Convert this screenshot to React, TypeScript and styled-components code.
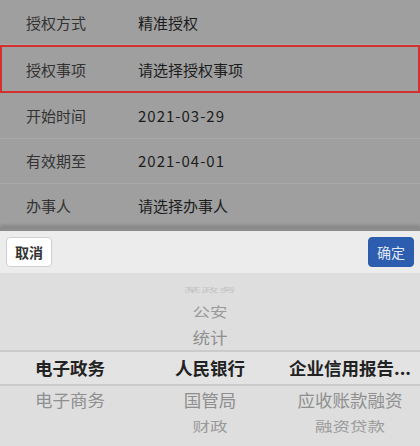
import React from 'react';
import styled, { createGlobalStyle } from 'styled-components';

const GlobalStyle = createGlobalStyle`
  html, body {
    margin: 0;
    padding: 0;
    background: #9f9f9f;
  }
  body {
    font-family: "Noto Sans CJK SC", "Noto Sans", sans-serif;
  }
`;

const Page = styled.div`
  width: 420px;
  height: 446px;
  display: flex;
  flex-direction: column;
  overflow: hidden;
`;

const Form = styled.div`
  height: 228px;
  background: #9f9f9f;
  display: flex;
  flex-direction: column;
`;

const Row = styled.div<{ $active?: boolean }>`
  flex: 1;
  display: flex;
  align-items: center;
  box-sizing: border-box;
  border-bottom: 1px solid #a9a9a9;
  border: ${(p) => (p.$active ? '2px solid #d2312f' : undefined)};
  padding-left: ${(p) => (p.$active ? '24px' : '26px')};
  font-size: 15px;

  &:last-child {
    border-bottom: none;
  }
`;

const Label = styled.span`
  width: 112px;
  color: #333;
`;

const Value = styled.span<{ $date?: boolean }>`
  color: #1c1c1c;
  letter-spacing: ${(p) => (p.$date ? '1px' : '0')};
`;

const Sheet = styled.div`
  flex: 1;
  display: flex;
  flex-direction: column;
  box-shadow: 0 -3px 3px rgba(0, 0, 0, 0.15);
  border-top: 3px solid #8c8c8c;
`;

const Toolbar = styled.div`
  height: 42px;
  background: #ececec;
  display: flex;
  align-items: center;
  justify-content: space-between;
  padding: 0 6px;
`;

const Button = styled.button<{ $primary?: boolean }>`
  width: 46px;
  height: 30px;
  border-radius: 4px;
  font-family: "Noto Sans CJK SC", sans-serif;
  font-size: 14px;
  font-weight: ${(p) => (p.$primary ? 400 : 700)};
  padding: 0;
  border: 1px solid ${(p) => (p.$primary ? '#2b5cab' : '#cfcfcf')};
  background: ${(p) => (p.$primary ? '#2c5daf' : '#ffffff')};
  color: ${(p) => (p.$primary ? '#e2e9f4' : '#333')};
`;

const Wheel = styled.div`
  flex: 1;
  background: #dedede;
  display: grid;
  grid-template-columns: repeat(3, 1fr);
  position: relative;
`;

const Band = styled.div`
  position: absolute;
  left: 0;
  right: 0;
  top: 77px;
  height: 32px;
  border-top: 2px solid #cbcbcb;
  border-bottom: 2px solid #cbcbcb;
  background: #e3e3e3;
  pointer-events: none;
`;

const Column = styled.div`
  position: relative;
  display: flex;
  flex-direction: column;
  align-items: center;
  padding-top: 8px;
  z-index: 1;
`;

const Item = styled.div<{ $h: number; $scale: number; $color: string; $bold?: boolean }>`
  height: ${(p) => p.$h}px;
  line-height: ${(p) => p.$h}px;
  font-size: 17.5px;
  white-space: nowrap;
  color: ${(p) => p.$color};
  font-weight: ${(p) => (p.$bold ? 700 : 400)};
  transform: scaleY(${(p) => p.$scale});
`;

type Cell = string | null;

const slots = [
  { h: 18, scale: 0.35, color: '#c4c4c4' },
  { h: 26, scale: 0.75, color: '#9a9a9a' },
  { h: 26, scale: 0.9, color: '#8f8f8f' },
  { h: 34, scale: 1, color: '#222', bold: true },
  { h: 30, scale: 0.95, color: '#8f8f8f' },
  { h: 22, scale: 0.72, color: '#9a9a9a' },
];

const columns: Cell[][] = [
  [null, null, null, '电子政务', '电子商务', null],
  ['某政务', '公安', '统计', '人民银行', '国管局', '财政'],
  [null, null, null, '企业信用报告...', '应收账款融资', '融资贷款'],
];

const rows = [
  ['授权方式', '精准授权'],
  ['授权事项', '请选择授权事项'],
  ['开始时间', '2021-03-29'],
  ['有效期至', '2021-04-01'],
  ['办事人', '请选择办事人'],
];

const App: React.FC = () => {
  return (
    <Page>
      <GlobalStyle />
      <Form>
        {rows.map(([label, value], i) => (
          <Row key={label} $active={i === 1}>
            <Label>{label}</Label>
            <Value $date={/^\d/.test(value)}>{value}</Value>
          </Row>
        ))}
      </Form>
      <Sheet>
        <Toolbar>
          <Button>取消</Button>
          <Button $primary>确定</Button>
        </Toolbar>
        <Wheel>
          <Band />
          {columns.map((col, ci) => (
            <Column key={ci}>
              {col.map((text, si) => (
                <Item
                  key={si}
                  $h={slots[si].h}
                  $scale={slots[si].scale}
                  $color={slots[si].color}
                  $bold={slots[si].bold}
                >
                  {text ?? ''}
                </Item>
              ))}
            </Column>
          ))}
        </Wheel>
      </Sheet>
    </Page>
  );
};

export default App;
